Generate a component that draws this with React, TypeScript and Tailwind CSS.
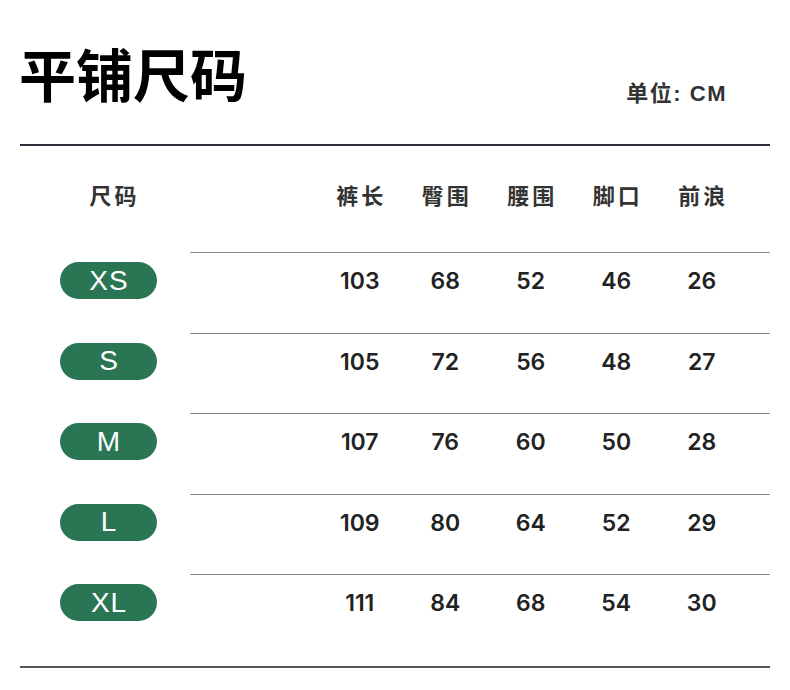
const cols = ['裤长', '臀围', '腰围', '脚口', '前浪'];

const rows = [
  { size: 'XS', values: [103, 68, 52, 46, 26] },
  { size: 'S', values: [105, 72, 56, 48, 27] },
  { size: 'M', values: [107, 76, 60, 50, 28] },
  { size: 'L', values: [109, 80, 64, 52, 29] },
  { size: 'XL', values: [111, 84, 68, 54, 30] },
];

const cjk = "font-['Liberation_Sans','Noto_Sans_CJK_SC',sans-serif]";
const num = "font-['Inter','Liberation_Sans',sans-serif]";

export default function App() {
  return (
    <div className={`w-[790px] h-[690px] bg-white px-[20px] overflow-hidden ${cjk}`}>
      {/* Title */}
      <div className="flex items-end justify-between mt-[49px] h-[57px]">
        <h1 className="text-[57px] leading-none font-bold text-black -ml-[1px]">平铺尺码</h1>
        <span className="text-[22px] leading-none font-bold text-[#333] tracking-[1.5px] mr-[43px] mb-[1px]">
          单位: CM
        </span>
      </div>
      <div className="mt-[38px] h-[2px] bg-[#2b2d38]" />

      {/* Header */}
      <div className="flex h-[106px] pt-[40px]">
        <div className="w-[170px] flex">
          <span className="ml-[44px] w-[98px] pl-[3px] text-center text-[22px] leading-[22px] font-semibold text-[#333] tracking-[3px]">
            尺码
          </span>
        </div>
        <div className="flex-1 flex pl-[127px]">
          {cols.map(c => (
            <span key={c} className="w-[85.5px] pl-[3px] text-center text-[22px] leading-[22px] font-semibold text-[#333] tracking-[3px]">
              {c}
            </span>
          ))}
        </div>
      </div>

      {/* Rows */}
      {rows.map(r => (
        <div key={r.size} className="flex h-[80.5px]">
          <div className="w-[170px] pt-[10px]">
            <div className="ml-[40px] w-[97px] h-[37px] rounded-full bg-[#2a7553] flex items-center justify-center pl-[1px] text-white text-[28px] leading-none tracking-[1px]">
              {r.size}
            </div>
          </div>
          <div className={`flex-1 border-t border-[#8a8a8a] flex pl-[127px] pt-[17px] ${num}`}>
            {r.values.map((v, i) => (
              <span key={i} className="w-[85.5px] text-center text-[23px] leading-[23px] font-semibold text-[#222]">
                {v}
              </span>
            ))}
          </div>
        </div>
      ))}

      <div className="mt-[11.5px] h-[2px] bg-[#555]" />
    </div>
  );
}
